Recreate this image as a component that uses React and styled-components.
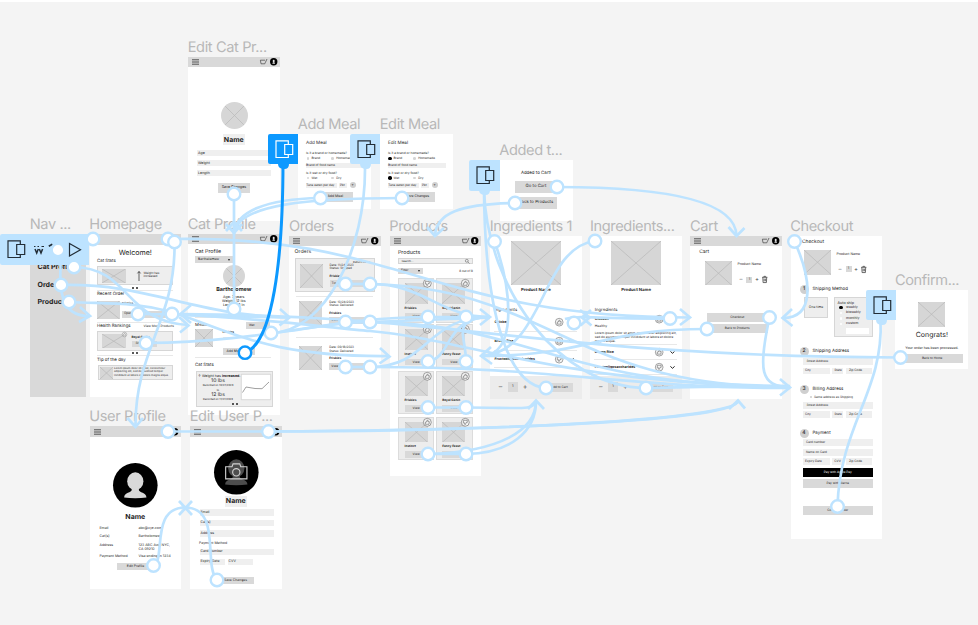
import React from 'react';
import styled, { createGlobalStyle, css } from 'styled-components';

const GlobalStyle = createGlobalStyle`
  * { box-sizing: border-box; }
  html, body { margin: 0; padding: 0; background: #f4f4f4; }
  body {
    font-family: Inter, "Liberation Sans", sans-serif;
    color: #1e1e1e;
    overflow: hidden;
    text-rendering: geometricPrecision;
  }
`;

const SKY = '#bde3ff';
const BLUE = '#0d99ff';

const Canvas = styled.main`
  position: relative;
  width: 978px;
  height: 625px;
  background: #f4f4f4;
  border-top: 2px solid #fff;
  overflow: hidden;
`;

const World = styled.div`
  position: absolute;
  inset: -2px 0 0 0;
`;

const Node = styled.section`
  position: absolute;
  left: ${(p) => p.$x}px;
  top: ${(p) => p.$y}px;
  width: ${(p) => p.$w}px;
  height: ${(p) => p.$h}px;
`;

const Board = styled.div`
  width: 100%;
  height: 100%;
  display: flex;
  flex-direction: column;
  background: ${(p) => p.$bg || '#fff'};
`;

const NodeTitle = styled.h2`
  position: absolute;
  left: -0.3px;
  bottom: 100%;
  margin: 0;
  height: 20px;
  line-height: 20px;
  font-size: 14.6px;
  font-weight: 400;
  letter-spacing: -0.38px;
  color: #b8b8b8;
  white-space: nowrap;
`;

const place = css`
  flex: none;
  margin-top: ${(p) => p.$t || 0}px;
  margin-left: ${(p) => p.$l || 0}px;
  ${(p) => p.$w && `width: ${p.$w}px;`}
  ${(p) => p.$h && `height: ${p.$h}px;`}
`;

const Row = styled.div`
  ${place}
  display: flex;
  align-items: ${(p) => p.$align || 'flex-start'};
  justify-content: ${(p) => p.$justify || 'flex-start'};
  gap: ${(p) => p.$gap || 0}px;
`;

const Column = styled.div`
  ${place}
  display: flex;
  flex-direction: column;
`;

const Text = styled.div`
  ${place}
  line-height: ${(p) => p.$h}px;
  font-size: ${(p) => p.$s || 3.3}px;
  font-weight: ${(p) => (p.$bold ? 700 : 400)};
  text-align: ${(p) => (p.$center ? 'center' : 'left')};
  color: ${(p) => p.$color || '#1e1e1e'};
  white-space: nowrap;
`;

const Panel = styled.div`
  ${place}
  display: flex;
  flex-direction: ${(p) => (p.$column ? 'column' : 'row')};
  align-items: flex-start;
  background: #eee;
  border: 1px solid #d6d6d6;
`;

const Button = styled.div`
  ${place}
  display: flex;
  align-items: center;
  justify-content: ${(p) => (p.$left ? 'flex-start' : 'center')};
  padding-left: ${(p) => (p.$left ? p.$left : 0)}px;
  background: ${(p) => (p.$dark ? '#000' : '#d9d9d9')};
  color: ${(p) => (p.$dark ? '#fff' : '#1e1e1e')};
  font-size: ${(p) => p.$s || 3.1}px;
  line-height: 1;
  white-space: nowrap;
`;

const Field = styled.div`
  ${place}
  display: flex;
  align-items: center;
  padding-left: ${(p) => p.$pad ?? 2}px;
  background: #efefef;
  font-size: ${(p) => p.$s || 3.1}px;
  line-height: 1;
  white-space: nowrap;
`;

const Divider = styled.div`
  ${place}
  height: 1px;
  background: #e8e8e8;
`;

const Select = styled(Button)`
  justify-content: space-between;
  padding: 0 3px;
`;

const Caret = styled.i`
  border: 1.5px solid transparent;
  border-top: 2px solid #222;
  border-bottom: 0;
`;

const NameTag = styled(Text)`
  align-self: center;
  background: #efefef;
`;

const PictureBox = styled.div`
  ${place}
  background: #d6d6d6;
  border-radius: ${(p) => (p.$round ? '50%' : 0)};
  overflow: hidden;
  svg { display: block; width: 100%; height: 100%; }
`;

const Picture = (props) => (
  <PictureBox {...props}>
    <svg viewBox="0 0 20 20" preserveAspectRatio="none">
      <path
        d={props.$round ? 'M3 3L17 17M17 3L3 17' : 'M0 0L20 20M20 0L0 20'}
        stroke="#b8b8b8"
        strokeWidth="0.7"
        vectorEffect="non-scaling-stroke"
      />
    </svg>
  </PictureBox>
);

const DotsRow = styled.div`
  ${place}
  display: flex;
  gap: 2px;
  i { width: 2px; height: 2px; border-radius: 50%; background: #222; }
`;
const Dots = (p) => <DotsRow {...p}><i /><i /></DotsRow>;

const Icon = styled.svg`
  ${place}
  display: block;
  overflow: visible;
`;

const Thumb = ({ down, size = 8.4, ...p }) => (
  <Icon {...p} $w={size} $h={size} viewBox="0 0 10 10" fill="none" stroke="#5a5a5a" strokeWidth="0.65">
    <circle cx="5" cy="5" r="4.6" fill="#f6f6f6" />
    <path
      transform={down ? 'rotate(180 5 5)' : undefined}
      d="M2.7 4.8h1.2L5 2.3c.9 0 1 .8.7 2h1.7l-.4 3H2.7z"
    />
  </Icon>
);

const Trash = (p) => (
  <Icon {...p} $w={5.5} $h={7} viewBox="0 0 6 8" fill="none" stroke="#444" strokeWidth="0.9">
    <path d="M0 1.5h6M2 1.3V.4h2v.9M.8 1.6l.3 5.9h3.8l.3-5.9M2.3 3v3M3.7 3v3" />
  </Icon>
);

const Chevron = (p) => (
  <Icon {...p} $w={5} $h={3} viewBox="0 0 5 3" fill="none" stroke="#222" strokeWidth="1">
    <path d="M.4.4L2.5 2.3 4.6.4" />
  </Icon>
);

const HeaderBar = styled.header`
  flex: none;
  height: ${(p) => p.$h || 10.3}px;
  background: #d9d9d9;
  display: flex;
  align-items: center;
  padding: 0 2.5px 0 4px;
  gap: 2.6px;
`;
const Grow = styled.span`flex: 1;`;

const Header = ({ blank, h }) => (
  <HeaderBar $h={h}>
    {!blank && (
      <>
        <Icon $w={7} $h={6} viewBox="0 0 7 6" stroke="#444" strokeWidth="0.9">
          <path d="M0 .8h7M0 3h7M0 5.2h7" />
        </Icon>
        <Grow />
        <Icon $w={7} $h={5.5} viewBox="0 0 7 5.5" fill="none" stroke="#444" strokeWidth="0.7">
          <path d="M7 0L5.2 3.8 4.8 4.8H1L.4 1.2H5" />
        </Icon>
        <Icon $w={7.4} $h={7.4} viewBox="0 0 8 8">
          <circle cx="4" cy="4" r="4" />
          <ellipse cx="4" cy="3.3" rx="1.1" ry="1.5" fill="#e6e6e6" />
          <path d="M2.6 6.2c0-2 2.8-2 2.8 0z" fill="#e6e6e6" />
        </Icon>
      </>
    )}
  </HeaderBar>
);

const Screen = ({ title, x, y, w = 91.6, h = 163, bg, children }) => (
  <Node $x={x} $y={y} $w={w} $h={h}>
    <Board $bg={bg}>{children}</Board>
    <NodeTitle>{title}</NodeTitle>
  </Node>
);

/* ---------- screens ---------- */

const Nav = () => (
  <Screen title="Nav ..." x={30} y={234} w={56} bg="#d9d9d9">
    <Text $bold $s={7} $t={28.3} $l={7.5} $h={10}>Cat Profile</Text>
    <Text $bold $s={7} $t={7.7} $l={7.5} $h={10}>Orders</Text>
    <Text $bold $s={7} $t={7} $l={7.5} $h={10}>Products</Text>
  </Screen>
);

const Homepage = () => (
  <Screen title="Homepage" x={89.5} y={234}>
    <Header blank h={10.5} />
    <Text $s={7.1} $t={3.5} $h={10} $center>Welcome!</Text>
    <Text $s={4.4} $t={0.5} $l={7.5} $h={5}>Cat Stats</Text>
    <Panel $t={2} $l={7.5} $w={76} $h={19}>
      <Picture $t={2} $l={4} $w={23.5} $h={14} />
      <Icon $t={4} $l={11} $w={4} $h={10} viewBox="0 0 4 10" fill="none" stroke="#222" strokeWidth="0.7">
        <path d="M2 10V.5M.4 2.4L2 .5l1.6 1.9" />
      </Icon>
      <Column $t={5} $l={3}>
        <Text $s={3} $h={3.8}>Weight has</Text>
        <Text $s={3} $h={3.8}>increased</Text>
      </Column>
    </Panel>
    <Dots $t={2} $l={42.5} $h={2} />
    <Divider $t={1} $l={7.5} $w={76} />
    <Text $s={4.4} $t={1.5} $l={7.5} $h={5}>Recent Order</Text>
    <Row $t={3.5} $l={7.5} $h={18} $gap={2.5}>
      <Picture $w={22.5} $h={18} />
      <Column>
        <Text $bold $s={2.9} $h={4}>Friskies</Text>
        <Button $t={6} $w={50} $h={7} $left={2}>Open</Button>
      </Column>
    </Row>
    <Divider $t={3.5} $l={7.5} $w={76} />
    <Row $t={0.5} $l={7.5} $w={77} $h={5} $justify="space-between">
      <Text $s={4.4} $h={5}>Health Rankings</Text>
      <Text $s={3.2} $h={5}>View More Products</Text>
    </Row>
    <Panel $t={2} $l={7.5} $w={76} $h={20.5}>
      <Picture $t={2} $l={4} $w={23.5} $h={14.5} />
      <Thumb $t={0.8} $l={-4} size={5} />
      <Column $l={5} $t={3}>
        <Text $bold $s={3.1} $h={4}>Royal Canin</Text>
        <Button $t={2} $w={25} $h={6.5} $left={4}>Shop</Button>
      </Column>
    </Panel>
    <Dots $t={0.5} $l={42.5} $h={2} />
    <Divider $t={1.5} $l={7.5} $w={76} />
    <Text $s={4.4} $t={2} $l={7.5} $h={5}>Tip of the day</Text>
    <Panel $t={1.5} $l={8} $w={75.5} $h={15.8}>
      <Picture $t={1} $l={1} $w={13} $h={12} />
      <Column $t={1} $l={1.5}>
        <Text $s={2.7} $h={3.5}>Lorem ipsum dolor sit amet, consectetur</Text>
        <Text $s={2.7} $h={3.5}>adipiscing elit, sed do eiusmod tempor</Text>
        <Text $s={2.7} $h={3.5}>incididunt ut labore et dolore magna aliqua.</Text>
      </Column>
    </Panel>
  </Screen>
);

const EditCat = () => (
  <Screen title="Edit Cat Pr..." x={188} y={57} h={164}>
    <Header />
    <Picture $round $t={34.7} $l={32.5} $w={27} $h={27} />
    <NameTag $bold $s={7} $t={5.5} $w={22} $h={11} $center>Name</NameTag>
    <Field $s={3.6} $t={5} $l={9} $w={74} $h={6} $pad={1}>Age</Field>
    <Field $s={3.6} $t={4} $l={9} $w={74} $h={6} $pad={1}>Weight</Field>
    <Field $s={3.6} $t={4} $l={9} $w={74} $h={6} $pad={1}>Length</Field>
    <Button $s={3.6} $t={6.5} $l={30} $w={32} $h={10.5}>Save Changes</Button>
  </Screen>
);

const CatProfile = () => (
  <Screen title="Cat Profile" x={188} y={234} h={181}>
    <Header h={10} />
    <Text $s={5.3} $t={4.5} $l={7} $h={6}>Cat Profile</Text>
    <Select $t={1.5} $l={7} $w={38} $h={7} $s={3.4}>Bartholomew<Caret /></Select>
    <Picture $round $t={2} $l={35} $w={22} $h={22} />
    <Text $bold $s={5.4} $t={0} $h={7} $center>Bartholomew</Text>
    <Text $s={3.6} $t={0.7} $h={4} $center>Age: 3 years</Text>
    <Text $s={3.6} $h={4} $center>Weight: 12 lbs</Text>
    <Text $s={3.6} $h={4} $center>Length: 12 in</Text>
    <Divider $t={10} $l={7} $w={76} />
    <Row $t={4} $l={7} $w={75} $h={8} $justify="space-between">
      <Text $s={4.3} $h={8}>Meals</Text>
      <Select $w={24} $h={7.5} $s={3}>Wet<Caret /></Select>
    </Row>
    <Row $t={-0.3} $l={7} $gap={9.5}>
      <Picture $w={18} $h={18} />
      <Column $t={1}>
        <Text $bold $s={3} $h={5}>Friskies</Text>
        <Divider $t={2} $w={25} />
        <Button $t={10} $w={32} $h={7} $left={4} $s={3.3}>Add Meal</Button>
      </Column>
    </Row>
    <Divider $t={1.7} $l={7} $w={76} />
    <Text $s={4.4} $t={5} $l={7} $h={6}>Cat Stats</Text>
    <Panel $t={2} $l={8} $w={76.5} $h={36} $column>
      <Row $gap={2.5}>
        <Column $t={1.5} $l={1} $w={40}>
          <Text $s={3.6} $h={4}>↑ Weight has <b>increased.</b></Text>
          <Text $s={5.1} $h={6.5} $center>10 lbs</Text>
          <Text $s={2.6} $h={3.5} $center>Recorded on 10/24/2023</Text>
          <Text $s={2.6} $h={4} $center>to</Text>
          <Text $s={5.1} $h={6} $center>12 lbs</Text>
          <Text $s={2.6} $h={3.5} $center>Recorded on 11/24/2023</Text>
        </Column>
        <Icon $t={1.5} $w={30} $h={26} viewBox="0 0 30 26" fill="none" stroke="#ccc" strokeWidth="0.7">
          <path d="M.3.3h29.4v25.4H.3z" fill="#fff" />
          <path d="M1.5 18.5L5 13l9 1.5 7 .2L28 8" stroke="#777" />
        </Icon>
      </Row>
      <Dots $t={1.5} $l={34.5} />
    </Panel>
  </Screen>
);

const OrderItem = ({ date, status, top }) => (
  <Row $t={top} $l={10} $h={24} $gap={7}>
    <Picture $w={23} $h={24} />
    <Column $w={44}>
      <Text $s={3} $h={3.5}>Date: {date}</Text>
      <Text $s={3} $h={3.5}>Status: {status}</Text>
      <Text $bold $s={3.1} $t={2.8} $h={4}>Friskies</Text>
      <Button $t={2.5} $w={40} $h={7} $left={2}>View</Button>
    </Column>
  </Row>
);

const Orders = () => (
  <Screen title="Orders" x={289.3} y={236}>
    <Header />
    <Text $s={5.2} $t={3.2} $l={5.3} $h={6}>Orders</Text>
    <Panel $t={2.5} $l={5.3} $w={80.5} $h={34.5}>
      <Row $t={5} $l={4} $gap={7}>
        <Picture $w={23} $h={24} />
        <Column $t={-4}>
          <Text $s={2.9} $h={4} $l={23.5}>Return Items</Text>
          <Text $s={3} $h={3.4}>Date: 11/24/2023</Text>
          <Text $s={3} $h={3.4}>Status: Shipped</Text>
          <Text $bold $s={3.1} $t={3} $h={4}>Friskies</Text>
          <Button $t={2.7} $w={43} $h={7} $left={2}>Track</Button>
        </Column>
      </Row>
    </Panel>
    <Divider $t={4} $l={7} $w={77} />
    <OrderItem top={3.5} date="10/24/2023" status="Delivered" />
    <Divider $t={12} $l={7} $w={77} />
    <OrderItem top={8.5} date="09/18/2023" status="Delivered" />
  </Screen>
);

const ShopGrid = styled.div`
  display: grid;
  grid-template-columns: 36.3px 36.8px;
  grid-auto-rows: 44.3px;
  gap: 1.4px;
  margin: 4.5px 0 0 8.5px;
`;
const ShopCard = styled(Column)`
  background: #ededed;
  border: 1px solid #dcdcdc;
  padding: 4px 0 0 5.5px;
`;

const catalog = [
  ['Friskies', true], ['Royal Canin', false], ['Instinct', false], ['Fancy Feast', false],
  ['Friskies', false], ['Royal Canin', false], ['Instinct', false], ['Fancy Feast', true],
];

const Products = () => (
  <Screen title="Products" x={389.6} y={236} h={240}>
    <Header />
    <Text $s={5.3} $t={4} $l={8.4} $h={6}>Products</Text>
    <Panel $t={1.4} $l={8.4} $w={75} $h={6.4}>
      <Text $s={2.9} $l={2.5} $h={4.4} $w={64}>Search...</Text>
      <Icon $t={0} $w={4.5} $h={4.5} viewBox="0 0 5 5" fill="none" stroke="#555" strokeWidth="0.6">
        <path d="M3.2 3.2L5 5M.4 2a1.6 1.6 0 103.2 0A1.6 1.6 0 10.4 2" />
      </Icon>
    </Panel>
    <Row $t={3.6} $l={8.4} $w={75} $h={6.3} $justify="space-between">
      <Select $w={25} $h={6.3}>Filter<Caret /></Select>
      <Text $s={3} $h={6}>8 out of 8</Text>
    </Row>
    <ShopGrid>
      {catalog.map(([name, down], i) => (
        <ShopCard key={i} $t={i > 3 ? 1 : 0}>
          <Row>
            <Picture $w={23} $h={20.6} />
            <Thumb down={down} $t={-4} $l={-4.4} size={8.6} />
          </Row>
          <Text $bold $s={3.1} $t={2} $h={4}>{name}</Text>
          <Button $t={3} $w={25} $h={6.7} $left={8}>View</Button>
        </ShopCard>
      ))}
    </ShopGrid>
  </Screen>
);

const BuyFooter = styled(Row)`
  background: #ececec;
  height: 23px;
  padding: 6px 9px 0 7px;
  font-size: 3px;
`;
const Buy = ({ t }) => (
  <BuyFooter $t={t}>
    <Text $s={7} $w={7} $h={10} $color="#555" $center>–</Text>
    <Button $l={4} $w={9.5} $h={10} $s={3.6}>1</Button>
    <Text $s={7} $l={3.5} $w={8} $h={10} $color="#555" $center>+</Text>
    <Button $l={17} $t={1} $w={27} $h={9} $left={5}>Add to Cart</Button>
  </BuyFooter>
);

const Ingredient = ({ name, top }) => (
  <Row $t={top} $l={4.5} $w={83} $h={9} $align="center">
    <Text $bold $s={3.5} $w={60.5} $h={6}>{name}</Text>
    <Thumb down={name[0] === 'F'} />
    <Chevron $l={6} />
  </Row>
);

const IngredientsOne = () => (
  <Screen title="Ingredients 1" x={490} y={236}>
    <Picture $t={5} $l={21} $w={50} $h={44} />
    <Text $bold $s={4.3} $t={3} $h={6} $center>Product Name</Text>
    <Text $s={4.3} $t={13.5} $l={4.5} $h={6}>Ingredients</Text>
    <Ingredient top={4} name="Chicken" />
    <Divider $t={4.5} $l={4} $w={83} />
    <Ingredient top={4.5} name="Brown Rice" />
    <Divider $t={4} $l={4} $w={83} />
    <Ingredient top={4} name="Fructooligosaccharides" />
    <Divider $t={3} $l={4} $w={83} />
    <Buy t={8.5} />
  </Screen>
);

const IngredientsTwo = () => (
  <Screen title="Ingredients..." x={590.3} y={236}>
    <Picture $t={5} $l={21} $w={50} $h={44} />
    <Text $bold $s={4.3} $t={3} $h={6} $center>Product Name</Text>
    <Text $s={4.3} $t={13.5} $l={4.5} $h={6}>Ingredients</Text>
    <Ingredient top={1} name="Chicken" />
    <Text $s={3.4} $t={0} $l={4.5} $h={5}>Healthy</Text>
    <Text $s={3.15} $t={3.5} $l={4.5} $h={3.8}>Lorem ipsum dolor sit amet, consectetur adipiscing elit,</Text>
    <Text $s={3.15} $l={4.5} $h={3.8}>sed do eiusmod tempor incididunt ut labore et dolore</Text>
    <Text $s={3.15} $l={4.5} $h={3.8}>magna aliqua.</Text>
    <Divider $t={1} $l={4} $w={83} />
    <Ingredient top={2.5} name="Brown Rice" />
    <Divider $t={2.5} $l={4} $w={83} />
    <Ingredient top={2.5} name="Fructooligosaccharides" />
    <Divider $t={2.5} $l={4} $w={83} />
    <Buy t={0.2} />
  </Screen>
);

const ProductLine = ({ t, l }) => (
  <Row $t={t} $l={l} $gap={5.5}>
    <Picture $w={27} $h={24.5} />
    <Column $t={1.5}>
      <Text $s={3.5} $h={5}>Product Name</Text>
      <Row $t={8.5} $l={2} $h={8} $align="center">
        <Text $s={6} $w={4} $h={7} $color="#555">–</Text>
        <Button $l={3} $w={6} $h={6.5} $s={3.4}>1</Button>
        <Text $s={6} $l={2.5} $w={5} $h={7} $color="#444">+</Text>
        <Trash $l={2} />
      </Row>
    </Column>
  </Row>
);

const Cart = () => (
  <Screen title="Cart" x={690.3} y={236}>
    <Header />
    <Text $s={4.9} $t={3} $l={9} $h={6}>Cart</Text>
    <ProductLine t={5.7} l={14.7} />
    <Button $t={27.3} $l={16.5} $w={61} $h={9}>Checkout</Button>
    <Button $t={2.6} $l={16.5} $w={61} $h={9}>Back to Products</Button>
  </Screen>
);

const StepNumber = styled.div`
  width: 9px;
  height: 9px;
  border-radius: 50%;
  background: #cfcfcf;
  font-weight: 500;
  font-size: 5px;
  line-height: 9px;
  text-align: center;
`;
const Step = ({ n, t, children }) => (
  <Row $t={t} $l={9} $h={9} $gap={4} $align="center">
    <StepNumber>{n}</StepNumber>
    <Text $s={4.4} $h={9}>{children}</Text>
  </Row>
);
const FieldTrio = ({ t = 3, labels = ['City', 'State', 'Zip Code'] }) => (
  <Row $t={t} $l={12.5} $gap={2.7}>
    <Field $w={26.5} $h={6.8}>{labels[0]}</Field>
    <Field $w={11} $h={6.8}>{labels[1]}</Field>
    <Field $w={26.5} $h={6.8} $pad={3}>{labels[2]}</Field>
  </Row>
);

const Radio = styled.i`
  flex: none;
  width: ${(p) => (p.$on ? 3.6 : 2.6)}px;
  height: ${(p) => (p.$on ? 3.6 : 2.6)}px;
  margin: 0 ${(p) => (p.$on ? -0.5 : 0)}px;
  border-radius: 50%;
  background: ${(p) => (p.$on ? '#000' : p.$fill || '#fff')};
`;

const CustomInput = styled.div`
  width: 23px;
  height: 5.3px;
  margin: 2px 0 0 11px;
  background: #fff;
`;

const Checkout = () => (
  <Screen title="Checkout" x={790.5} y={236} h={302.5}>
    <Text $s={4.9} $t={2.5} $l={11.5} $h={6}>Checkout</Text>
    <ProductLine t={5.5} l={13.5} />
    <Step n="1" t={10.5}>Shipping Method</Step>
    <Row $t={2.5} $l={13.5} $gap={6}>
      <Panel $w={24} $h={21} $column>
        <Text $s={3.4} $h={19} $w={22} $center>One time</Text>
      </Panel>
      <Panel $w={38.5} $h={40} $column>
        <Text $s={3.7} $t={2} $l={2.5} $h={5}>Auto ship</Text>
        {['weekly', 'biweekly', 'monthly', 'custom'].map((v, i) => (
          <Row key={v} $t={0.3} $l={4.5} $h={5.2} $gap={4} $align="center">
            <Radio $on={i === 0} />
            <Text $s={3.5} $h={5}>{v}</Text>
          </Row>
        ))}
        <CustomInput />
      </Panel>
    </Row>
    <Step n="2" t={10.5}>Shipping Address</Step>
    <Field $t={2} $l={12.5} $w={69.5} $h={6.5} $pad={3.5}>Street Address</Field>
    <FieldTrio />
    <Step n="3" t={10.5}>Billing Address</Step>
    <Row $t={1} $l={19} $h={4} $gap={2} $align="center">
      <Radio $fill="#ccc" />
      <Text $s={3.1} $h={4}>Same address as Shipping</Text>
    </Row>
    <Field $t={3} $l={12.5} $w={69.5} $h={6.8} $pad={3.5}>Street Address</Field>
    <FieldTrio t={2.7} />
    <Step n="4" t={10.5}>Payment</Step>
    <Field $t={1.8} $l={12.5} $w={69.5} $h={6.8} $pad={3}>Card number</Field>
    <Field $t={2.6} $l={12.5} $w={69.5} $h={6.8} $pad={3}>Name on Card</Field>
    <FieldTrio t={2.7} labels={['Expiry Date', 'CVV', 'Zip Code']} />
    <Button $dark $t={3} $l={12.5} $w={69.5} $h={9}>Pay with Apple Pay</Button>
    <Button $t={2} $l={12.5} $w={69.5} $h={8.5}>Pay with Klarna</Button>
    <Button $t={18} $l={12.5} $w={69.5} $h={9}>Confirm Order</Button>
  </Screen>
);

const Confirmation = () => (
  <Screen title="Confirm..." x={895.2} y={290} w={73.3} h={79}>
    <Picture $t={12} $l={23} $w={27} $h={24.5} />
    <Text $s={7} $t={3.8} $h={10} $center>Congrats!</Text>
    <Text $s={3.5} $t={4.5} $h={6} $center>Your order has been processed.</Text>
    <Button $t={3} $l={6.5} $w={61} $h={9}>Back to Home</Button>
  </Screen>
);

const PlusDot = styled.div`
  width: 6px;
  height: 6px;
  border-radius: 50%;
  background: #cfcfcf;
  font-size: 4px;
  line-height: 6px;
  text-align: center;
`;

const ChoiceRow = ({ on, first, second }) => (
  <Row $t={1.3} $l={8.5} $h={4} $gap={2.5} $align="center">
    <Radio $on={on} $fill="#d5d5d5" />
    <Text $s={3.1} $w={17} $h={4}>{first}</Text>
    <Radio $fill="#d5d5d5" />
    <Text $s={3.1} $h={4}>{second}</Text>
  </Row>
);

const Meal = ({ title, x, on, action }) => (
  <Screen title={title} x={x} y={134} w={73} h={75}>
    <Text $s={4.6} $t={6.5} $l={8} $h={6}>{title}</Text>
    <Text $s={3.2} $t={4.5} $l={8} $h={4}>Is it a brand or homemade?</Text>
    <ChoiceRow on={on} first="Brand" second="Homemade" />
    <Field $t={2.5} $l={7.5} $w={58.5} $h={5.5} $pad={0.5}>Brand of food name</Field>
    <Text $s={3.2} $t={2.6} $l={8} $h={4}>Is it wet or dry food?</Text>
    <ChoiceRow on={on} first="Wet" second="Dry" />
    <Row $t={2} $l={7.5} $gap={2.5} $align="center">
      <Field $w={31} $h={5.3} $pad={0.7}>Tuna eaten per day</Field>
      <Field $w={8} $h={5.3} $pad={1}>Pkt</Field>
      <PlusDot>+</PlusDot>
    </Row>
    <Button $s={3.5} $t={4} $l={20} $w={34.5} $h={10}>{action}</Button>
  </Screen>
);

const Added = () => (
  <Screen title="Added t..." x={499.5} y={160} w={73} h={60.5}>
    <Text $s={4.4} $t={10.5} $h={6} $center>Added to Cart!</Text>
    <Button $s={4.3} $t={4.3} $l={15.5} $w={42} $h={12.3}>Go to Cart</Button>
    <Button $s={4.3} $t={3.8} $l={15.5} $w={42} $h={12.3}>Back to Products</Button>
  </Screen>
);

const Avatar = ({ camera }) => (
  <Icon $w={44.6} $h={44.6} viewBox="0 0 44 44">
    <circle cx="22" cy="22" r="22" />
    <g fill={camera ? '#4d4d4d' : '#d9d9d9'}>
      <ellipse cx="22" cy="18" rx="8" ry="8.8" />
      <path d="M18.5 23h7v3.5c0 3 7.5 2.5 7.5 7.5-7 1-15 1-22 0 0-5 7.5-4.5 7.5-7.5z" />
    </g>
    {camera && (
      <g fill="none" stroke="#d2d2d2" strokeWidth="1.1">
        <path d="M11.5 16.5h6.3l1-2.8h6.6l1 2.8H32.500v12H11.500z" />
        <circle cx="22" cy="22" r="3.6" />
      </g>
    )}
  </Icon>
);

const facts = [
  ['Email', ['abc@xyz.com'], 4.5], ['Cat(s)', ['Bartholomew'], 3],
  ['Address', ['123 ABC Ave, NYC,', 'CA 09210'], 3.7], ['Payment Method', ['Visa ending in 1234'], 3],
];

const UserProfile = () => (
  <Screen title="User Profile" x={89.5} y={426}>
    <Header h={11} />
    <Row $t={26.3} $justify="center"><Avatar /></Row>
    <Text $bold $s={7} $t={3.8} $h={10} $center>Name</Text>
    {facts.map(([label, lines, t]) => (
      <Row key={label} $t={t} $l={10}>
        <Text $s={3.5} $w={39} $h={5}>{label}</Text>
        <Column>{lines.map((v) => <Text key={v} $s={3.5} $h={4.3}>{v}</Text>)}</Column>
      </Row>
    ))}
    <Button $s={3.4} $t={4} $l={27.5} $w={37} $h={7}>Edit Profile</Button>
  </Screen>
);

const EditUser = () => (
  <Screen title="Edit User P..." x={190} y={426}>
    <Header h={11} />
    <Row $t={12.8} $justify="center"><Avatar camera /></Row>
    <NameTag $bold $s={7} $t={1.8} $w={22} $h={10.5} $center>Name</NameTag>
    <Field $s={3.5} $t={2.8} $l={9.5} $w={74} $h={6.8} $pad={1}>Email</Field>
    <Field $s={3.5} $t={3.4} $l={9.5} $w={74} $h={6.8} $pad={1}>Cat(s)</Field>
    <Field $s={3.5} $t={3.4} $l={9.5} $w={74} $h={6.8} $pad={1}>Address</Field>
    <Text $s={3.5} $t={3} $l={9} $h={6}>Payment Method</Text>
    <Field $s={3.5} $t={3} $l={9.5} $w={74} $h={6.8} $pad={1}>Card Number</Field>
    <Row $t={3.5} $l={9.5} $gap={3}>
      <Field $s={3.5} $w={25} $h={6.5} $pad={1}>Expiry Date</Field>
      <Field $s={3.5} $w={25.5} $h={6.5} $pad={1}>CVV</Field>
    </Row>
    <Button $s={3.4} $t={11.5} $l={27} $w={37} $h={6.8}>Save Changes</Button>
  </Screen>
);

/* ---------- prototype connections ---------- */

const Overlay = styled.svg`
  position: absolute;
  inset: 0;
  overflow: visible;
`;

const edges = [
  'M58 250C60.5 256 60.5 258 60.5 268C59 300 66 316 89 316',
  'M74 267C130 268 125 322 188 325',
  'M61 285C150 283 190 315 289 317.5',
  'M69 302C110 304 135 302 172 312C235 333 270 357 389 356',
  'M172 314C220 318 250 316 289 317.5',
  'M138 314C230 314 330 328 370 331C470 340 560 384 790 386',
  'M146 343C270 342 330 317 428 317',
  'M174.5 242C176 320 135 350 135.500 426',
  'M168 239C400 234 430 317.500 690 317.500',
  'M234 194V234', 'M234 309V221',
  'M320 198C265 199 236 212 234 233', 'M402 198C310 198 238 204 234 233',
  'M365 166C366 250 325 332 271 333C300 331 340 321 370 322',
  'M345.5 284H370', 'M345.5 322H370', 'M345.5 367H370',
  'M370 284C425 284 440 317 490 317', 'M370 284C550 288 570 387 790 387',
  'M370 322L490 317.5', 'M370 322C530 323 560 387 790 387',
  'M370 367C430 367 425 317 490 317', 'M370 367C560 367 620 388 790 388',
  'M428 317H490', 'M428 361.5C452 358 445 317 490 317', 'M466 361.5C466 335 450 319 490 317',
  'M428 407.5H466C520 407.5 534 411 536 401',
  'M428 454H466C510 453 536 432 536 401', 'M428 454C500 452 536 430 536 401',
  'M181 314C460 315 540 356 900 357.5',
  'M168 431.5H268.5C480 431.5 735 420 738 401', 'M268.5 431.5C480 430 735 422 738 401',
  'M484 190C485 320 510 386 546 388', 'M484 190C487 290 560 387 646 388',
  'M494.5 241.5C512 290 518 356 481 356', 'M595 241C540 248 545 353 481 356',
  'M707 329C600 329 590 356 481 356',
  'M565 319C578 315 595 319 670 318.5',
  'M646 388C690 387 730 386 790 387',
  'M557 187C650 187 736 197 736.5 236', 'M515 203C460 204 436 213 435 236',
  'M794.5 241.5C812 280 815 318 783 318',
  'M769.5 317.5C758 370 760 387 790 387',
  'M880.5 320C884 390 840 425 837.500 506',
  'M153.5 565.5C166 560 150 507.5 185 507.5', 'M217 580C203 565 222 507.5 185 507.5',
];

const heads = [
  'M80 307l10 9-11 6', 'M179 317l9.500 8.500-8.500 7', 'M191 305l-10.500 9 10.500 9',
  'M280 309l9.500 8.500-10 8', 'M380 348l9.500 8.500-10 7', 'M127.500 418l8 9 7.500-9',
  'M226 224l8 9 8-9', 'M226 231l8-9 8 9', 'M480 309l10 8-10 8', 'M491 347l-10 9 11 8',
  'M680 309l10 8.500-10 7.500', 'M427 227l8 9 9-8', 'M728.500 227l8 9 8-8',
  'M792 309l-9.500 9 10 8', 'M780 379l10 8.500-10 8', 'M528 409l8-8.500 8 8.500',
  'M729 409l9-8.500 7 8', 'M580 310l9.500 7.500-9 8', 'M591 310l-9 7.500 9.500 8',
  'M179 501l13 14M192 501l-13 14',
];

const hotspots = [
  [58, 250], [74, 267], [61, 285], [69, 302], [93, 239], [168, 239], [174.5, 242], [138, 314],
  [172, 314], [146, 343], [234, 194], [320.5, 198], [402, 198], [234, 309], [271, 333],
  [345.5, 284], [370, 284], [345.5, 322], [370, 322], [345.5, 367], [370, 367],
  [428, 317], [466, 317], [428, 361.5], [466, 361.5], [428, 407.5], [466, 407.5],
  [428, 454], [466, 454], [557, 187], [515, 203], [494.5, 241.5], [595, 241], [574, 323],
  [546, 388], [646, 388], [670, 318.5], [769.5, 317.5], [707, 329], [794.5, 241.5],
  [900.5, 357.5], [837.5, 506.5], [168, 431.5], [268.5, 431.5], [153.5, 565.5],
  [217, 580],
];

const Connections = () => (
  <Overlay width="978" height="625" fill="none" stroke={SKY} strokeWidth="2.7">
    {edges.map((d) => <path key={d} d={d} />)}
    {heads.map((d) => <path key={d} d={d} />)}
    <g fill="#fff" strokeWidth="2.4">
      {hotspots.map(([cx, cy]) => <circle key={`${cx}-${cy}`} cx={cx} cy={cy} r="6.3" />)}
    </g>
    <g stroke={BLUE}>
      <path d="M283 160C283 270 271 335 250 350" strokeWidth="3" />
      <circle cx="245" cy="352.7" r="6.2" fill="#fff" strokeWidth="2.4" />
    </g>
  </Overlay>
);

const BadgeBox = styled.div`
  position: absolute;
  left: ${(p) => p.$x}px;
  top: ${(p) => p.$y}px;
  width: ${(p) => p.$w || 30.5}px;
  height: 30.5px;
  border-radius: 2px 0 0 2px;
  background: ${(p) => (p.$active ? BLUE : SKY)};
  svg { display: block; overflow: visible; }
`;

const OverlayBadge = ({ x, y, active, wide }) => (
  <BadgeBox $x={x} $y={y} $active={active} $w={wide ? 89 : undefined}>
    <svg width={wide ? 89 : 30.5} height="30.5" fill="none" stroke={active ? '#fff' : '#222d36'} strokeWidth="1.2">
      {!wide && <path d="M10 30q0 4.5 5.5 5t5.500-5z" fill={active ? BLUE : SKY} stroke="none" />}
      <path d="M20.300 10.500V6.800H8v16.700h12.300v-3M16.700 10.500h8v10h-8z" />
      {wide && (
        <>
          <path d="M35 15l1.700 4 1.600-4M39.300 15l1.700 4 1.600-4" strokeWidth="1.500" />
          <path d="M34 12.500h1.500M37.500 12.500h1.500M41.500 12.500h2.500" />
          <path d="M48.800 12.300l3.500-2" strokeWidth="1.600" />
          <path d="M69.500 9.500v12.500l11-6.200z" />
        </>
      )}
    </svg>
  </BadgeBox>
);

export default function App() {
  return (
    <Canvas>
      <GlobalStyle />
      <World>
        <EditCat />
        <Nav />
        <Homepage />
        <CatProfile />
        <Orders />
        <Products />
        <Added />
        <IngredientsOne />
        <IngredientsTwo />
        <Cart />
        <Checkout />
        <Confirmation />
        <Meal title="Add Meal" x={298} action="Add Meal" />
        <Meal title="Edit Meal" x={380} on action="Save Changes" />
        <UserProfile />
        <EditUser />
        <OverlayBadge wide x={0} y={234} />
        <Connections />
        <OverlayBadge active x={267.7} y={133.5} />
        <OverlayBadge x={349.7} y={133.5} />
        <OverlayBadge x={469} y={160} />
        <OverlayBadge x={865.5} y={289.7} />
      </World>
    </Canvas>
  );
}
